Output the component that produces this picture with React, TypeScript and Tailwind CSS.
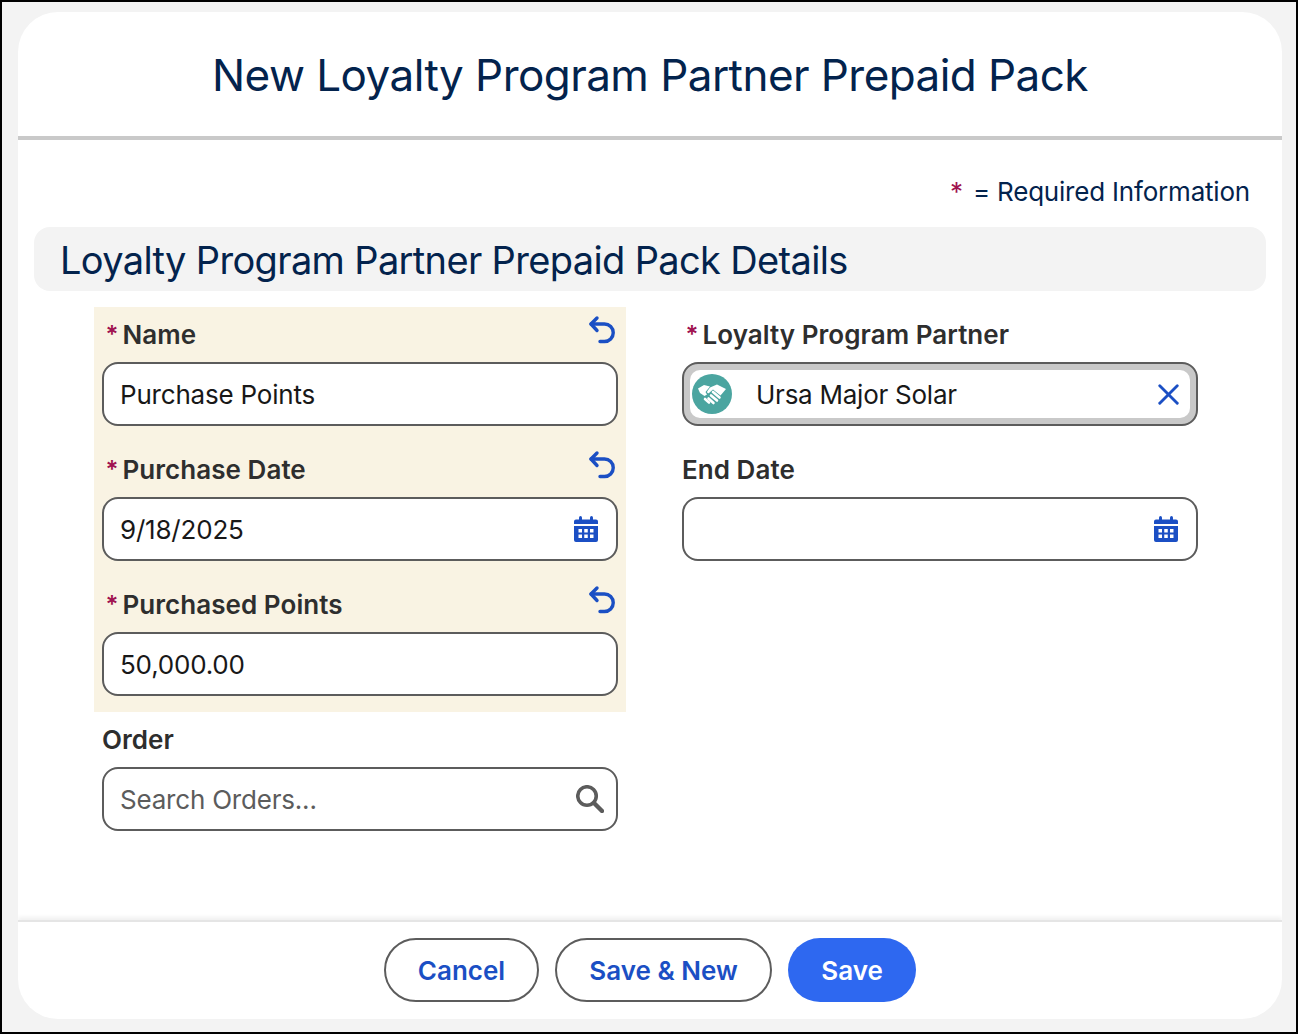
import { X } from "lucide-react";
import type { ReactNode } from "react";

function CalendarIcon() {
  return (
    <svg viewBox="0 0 24 26" className="w-6 h-[26px] text-[#1b4fc4]" fill="currentColor">
      <rect x="5" y="0" width="3" height="6" rx="1.500" />
      <rect x="16" y="0" width="3" height="6" rx="1.500" />
      <path d="M2 3.500h20a2 2 0 0 1 2 2V8H0V5.500a2 2 0 0 1 2-2Z" />
      <path fillRule="evenodd" d="M0 10h24v14a2 2 0 0 1-2 2H2a2 2 0 0 1-2-2Zm4.500 3v3.500H8V13Zm5.750 0v3.500h3.500V13ZM16 13v3.500h3.500V13ZM4.500 18.500V22H8v-3.500Zm5.750 0V22h3.500v-3.500Zm5.750 0V22h3.500v-3.500Z" />
    </svg>
  );
}

function UndoIcon() {
  return (
    <svg viewBox="0 0 28 30" className="absolute right-[10px] top-2 w-7 h-[30px] text-[#1b4fc4]" fill="none" stroke="currentColor" strokeWidth="3.400" strokeLinecap="round" strokeLinejoin="round">
      <path d="M9 3 3 9l6 6.500" />
      <path d="M3 9h13.500a8.750 8.750 0 0 1 0 17.500H12" />
    </svg>
  );
}

function SearchIcon() {
  return (
    <svg viewBox="0 0 28 28" className="w-7 h-7 -mr-[6px] text-[#5c5c5c]" fill="none" stroke="currentColor" strokeLinecap="round">
      <circle cx="11" cy="11" r="9.250" strokeWidth="3.600" />
      <path d="M18 18l8 8" strokeWidth="4.400" />
    </svg>
  );
}

function PartnerIcon() {
  return (
    <svg viewBox="0 0 40 40" className="w-10 h-10 rounded-full bg-[#4ba5a0] text-white" fill="currentColor">
      <path d="M6 14.500 12 11l6 1.500-4.500 5.500 1.500 2.500-2.500 1.500L8 19Z" />
      <path d="M18 13.500 25 10.500l9 4.500-5.500 6.500-7.500-6-4 3.500c-1.200.8-2.500-.5-1.700-1.700Z" />
      <g fill="none" stroke="currentColor" strokeWidth="2.600" strokeLinecap="round">
        <path d="M21 18l6.500 5.500" />
        <path d="M19 21.500l6 5" />
        <path d="M16.500 24.500l5 4.500" />
        <path d="M13 25l4 3.500" />
      </g>
    </svg>
  );
}

function Field({ label, required, undo, children }: { label: string; required?: boolean; undo?: boolean; children: ReactNode }) {
  return (
    <div className="h-[135px] px-2 pt-[13px] relative">
      <div className="h-[42px] flex items-start text-[26px] leading-[30px] font-semibold tracking-[0.05px] text-[#2e2e2e]">
        {required && <span className="text-[#a0134f] w-[21px] -ml-[0.5px] text-center text-[24px]">*</span>}
        {label}
      </div>
      {undo && <UndoIcon />}
      {children}
    </div>
  );
}

function Input({ value, placeholder, icon }: { value?: string; placeholder?: string; icon?: ReactNode }) {
  return (
    <div className="h-16 rounded-2xl border-2 border-[#5c5c5c] bg-white flex items-center justify-between pl-4 pr-[18px] text-[26px] tracking-[-0.2px] text-[#181818]">
      <span className={placeholder ? "text-[#5c5c5c]" : ""}>{value ?? placeholder}</span>
      {icon}
    </div>
  );
}

export default function App() {
  const outline = "h-16 rounded-full border-2 border-[#5c5c5c] bg-white text-[#1b4fc4] text-[26px] font-semibold";
  return (
    <div className="w-[1298px] h-[1034px] border-2 border-black bg-[#f3f3f3] pt-[10px] pl-[16px] pr-[14px] pb-[13px] font-['Inter',sans-serif]">
      <div className="h-full rounded-[40px] bg-white flex flex-col overflow-hidden">
        <div className="h-[128px] shrink-0 border-b-4 border-[#c9c9c9] flex items-center justify-center pt-[2px]">
          <h1 className="text-[44px] tracking-[-0.55px] text-[#03234d] font-normal">New Loyalty Program Partner Prepaid Pack</h1>
        </div>
        <div className="flex-1 px-4">
          <div className="text-right text-[26px] leading-[32px] tracking-[-0.2px] text-[#03234d] pt-9 pr-4">
            <span className="text-[#a0134f] mr-[10px]">*</span>= Required Information
          </div>
          <div className="mt-[19px] h-16 rounded-2xl bg-[#f3f3f3] flex items-center pl-[26px] pt-[2px] text-[38px] tracking-[-0.65px] text-[#03234d]">
            Loyalty Program Partner Prepaid Pack Details
          </div>
          <div className="mt-4 pl-[60px] grid grid-cols-[532px_532px] gap-x-12">
            <div>
              <div className="bg-[#f9f3e3]">
                <Field label="Name" required undo>
                  <Input value="Purchase Points" />
                </Field>
                <Field label="Purchase Date" required undo>
                  <Input value="9/18/2025" icon={<CalendarIcon />} />
                </Field>
                <Field label="Purchased Points" required undo>
                  <Input value="50,000.00" />
                </Field>
              </div>
              <Field label="Order">
                <Input placeholder="Search Orders..." icon={<SearchIcon />} />
              </Field>
            </div>
            <div>
              <Field label="Loyalty Program Partner" required>
                <div className="h-16 rounded-2xl border-2 border-[#5c5c5c] bg-[#c9c9c9] p-[6px]">
                  <div className="h-full rounded-[10px] bg-white flex items-center pl-[2px] pr-1 text-[26px] tracking-[-0.25px] text-[#181818]">
                    <PartnerIcon />
                    <span className="ml-[24px] flex-1">Ursa Major Solar</span>
                    <X size={35} strokeWidth={2} className="text-[#1b4fc4]" />
                  </div>
                </div>
              </Field>
              <Field label="End Date">
                <Input value="" icon={<CalendarIcon />} />
              </Field>
            </div>
          </div>
        </div>
        <div className="h-[99px] shrink-0 border-t-2 border-[#e5e5e5] shadow-[0_-3px_4px_rgba(0,0,0,0.06)] flex items-center justify-center gap-4 pb-[1px]">
          <button className={`${outline} w-[155px]`}>Cancel</button>
          <button className={`${outline} w-[217px]`}>Save &amp; New</button>
          <button className="h-16 w-32 rounded-full bg-[#2e68f0] text-white text-[26px] font-semibold">Save</button>
        </div>
      </div>
    </div>
  );
}
